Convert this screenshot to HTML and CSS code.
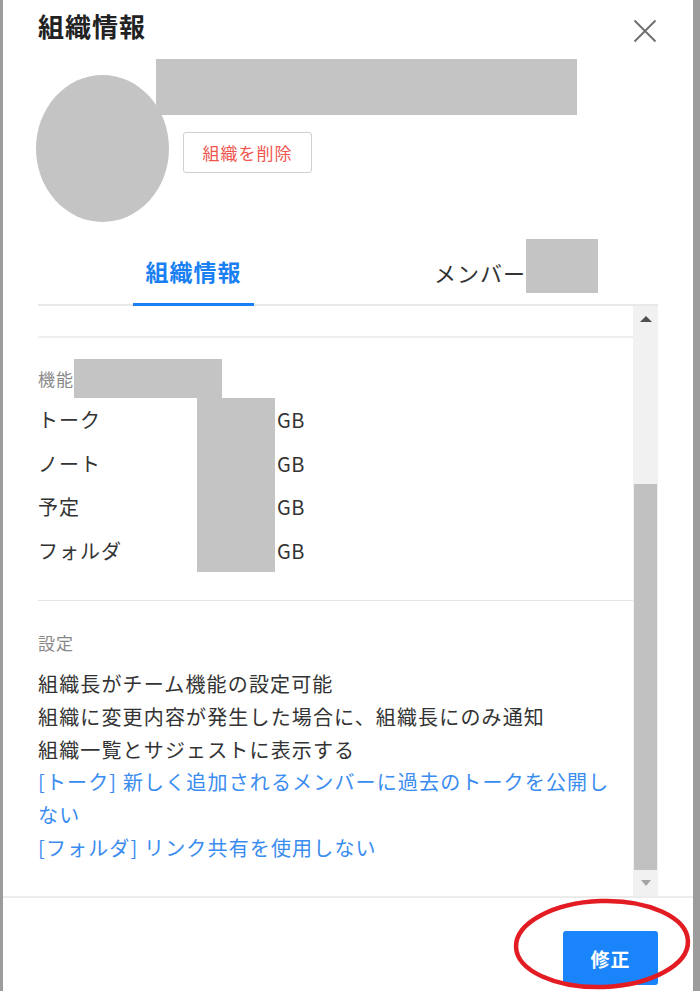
FILE: index.html
```html
<!DOCTYPE html>
<html lang="ja">
<head>
<meta charset="utf-8">
<title>組織情報</title>
<link rel="stylesheet" href="styles.css">
</head>
<body>
<div class="modal">
  <header class="header">
    <h1 class="title">組織情報</h1>
    <button class="close" aria-label="閉じる">
      <svg width="24" height="24" viewBox="0 0 24 24"><path d="M1.5 1.5 L22.5 22.5 M22.5 1.5 L1.5 22.5" stroke="#707070" stroke-width="2" fill="none"/></svg>
    </button>
  </header>

  <section class="profile">
    <div class="avatar"></div>
    <div class="profile-info">
      <div class="redact name-redact"></div>
      <button class="delete-btn">組織を削除</button>
    </div>
  </section>

  <nav class="tabs">
    <div class="tab tab-active"><span class="tab-label">組織情報</span></div>
    <div class="tab tab-members"><span class="tab-label">メンバー</span><span class="redact tab-redact"></span></div>
  </nav>

  <div class="scroll-area">
    <div class="scroll-content">
      <div class="top-gap"></div>
      <div class="divider thick"></div>
      <div class="section-label label-row"><span>機能</span><span class="redact label-redact"></span></div>
      <div class="rows">
        <div class="row"><span class="row-name">トーク</span><span class="redact row-val"></span><span class="unit">GB</span></div>
        <div class="row"><span class="row-name">ノート</span><span class="redact row-val"></span><span class="unit">GB</span></div>
        <div class="row"><span class="row-name">予定</span><span class="redact row-val"></span><span class="unit">GB</span></div>
        <div class="row"><span class="row-name">フォルダ</span><span class="redact row-val"></span><span class="unit">GB</span></div>
      </div>
      <div class="divider thin"></div>
      <div class="section-label settings-label">設定</div>
      <ul class="settings">
        <li>組織長がチーム機能の設定可能</li>
        <li>組織に変更内容が発生した場合に、組織長にのみ通知</li>
        <li>組織一覧とサジェストに表示する</li>
        <li class="link">[トーク] 新しく追加されるメンバーに過去のトークを公開しない</li>
        <li class="link">[フォルダ] リンク共有を使用しない</li>
      </ul>
    </div>
    <div class="scrollbar">
      <div class="sb-btn"><span class="arrow-up"></span></div>
      <div class="sb-track"></div>
      <div class="sb-thumb"></div>
      <div class="sb-btn"><span class="arrow-down"></span></div>
    </div>
  </div>

  <footer class="footer">
    <button class="primary-btn">修正</button>
  </footer>
</div>

<svg class="annotation" width="184" height="96" viewBox="0 0 184 96">
  <ellipse cx="90" cy="47" rx="86" ry="43" transform="rotate(-2 90 47)" fill="none" stroke="#e31b23" stroke-width="4.5"/>
</svg>
</body>
</html>
```

FILE: styles.css
```css
* { box-sizing: border-box; }

html, body {
  margin: 0;
  padding: 0;
}

body {
  width: 700px;
  height: 991px;
  overflow: hidden;
  background: #9c9c9c;
  font-family: "Noto Sans CJK JP", "Noto Sans", sans-serif;
  color: #333;
  position: relative;
}

.modal {
  margin-left: 3px;
  width: 690px;
  height: 991px;
  background: #fff;
  display: flex;
  flex-direction: column;
}

.header {
  display: flex;
  justify-content: space-between;
  align-items: flex-start;
  padding: 9px 36px 0 35px;
  height: 43px;
}

.title {
  margin: 0;
  font-size: 26px;
  line-height: 34px;
  font-weight: 700;
  letter-spacing: 1px;
  color: #222;
}

.close {
  margin-top: 10px;
  padding: 0;
  border: 0;
  background: none;
  width: 24px;
  height: 24px;
  display: block;
}

.close svg { display: block; }

.redact { background: #c4c4c4; display: block; }

.profile {
  display: flex;
  align-items: flex-start;
  margin-top: 16px;
  padding-left: 33px;
}

.avatar {
  width: 133px;
  height: 147px;
  margin-top: 16px;
  border-radius: 50%;
  background: #c4c4c4;
  flex: none;
}

.profile-info {
  margin-left: -13px;
  display: flex;
  flex-direction: column;
  align-items: flex-start;
}

.name-redact {
  width: 421px;
  height: 56px;
}

.delete-btn {
  margin-top: 17px;
  margin-left: 27px;
  width: 129px;
  height: 41px;
  border: 1px solid #cfcfcf;
  border-radius: 3px;
  background: #fff;
  color: #f0564f;
  font-family: inherit;
  font-size: 17px;
  letter-spacing: 1px;
  padding: 0;
}

.tabs {
  margin: 17px 35px 0;
  display: grid;
  grid-template-columns: 1fr 1fr;
  border-bottom: 2px solid #e8e8e8;
}

.tab {
  height: 65px;
  display: flex;
  justify-content: center;
  align-items: center;
  font-size: 22px;
  letter-spacing: 1px;
}

.tab-active .tab-label {
  align-self: stretch;
  display: flex;
  align-items: center;
  padding: 0 12px 0 13px;
  border-bottom: 3px solid #1a7ff2;
  margin-bottom: -2px;
  color: #1a7ff2;
  font-weight: 700;
  font-size: 23px;
  height: 67px;
}

.tab-members {
  padding-left: 26px;
  color: #333;
}

.tab-redact {
  width: 72px;
  height: 54px;
  margin-bottom: 12px;
}

.scroll-area {
  margin: 0 35px;
  height: 590px;
  display: flex;
}

.scroll-content {
  flex: 1;
  min-width: 0;
  padding-right: 12px;
}

.top-gap { height: 30px; }

.divider.thick { height: 2px; background: #efefef; margin-right: -12px; }
.divider.thin { height: 1px; background: #e6e6e6; margin-top: 28px; margin-right: -12px; }

.section-label {
  color: #888;
  font-size: 17px;
  letter-spacing: 1px;
}

.label-row {
  margin-top: 21px;
  display: flex;
  align-items: center;
  height: 39px;
}

.label-redact {
  width: 148px;
  height: 39px;
}

.rows { display: flex; flex-direction: column; }

.row {
  display: flex;
  align-items: center;
  height: 43.5px;
  font-size: 20px;
  letter-spacing: 1px;
}

.row-name { width: 159px; }

.row-val { width: 78px; height: 100%; }

.unit {
  margin-left: 2px;
  font-size: 20px;
  letter-spacing: 0.5px;
}

.settings-label {
  margin-top: 32px;
  line-height: 20px;
}

.settings {
  list-style: none;
  margin: 15px 0 0;
  padding: 0;
  font-size: 20px;
  letter-spacing: 1.15px;
  line-height: 32.8px;
}

.settings .link { color: #3a8cf0; }

.scrollbar {
  width: 25px;
  flex: none;
  background: #f1f1f1;
  display: flex;
  flex-direction: column;
}

.sb-btn {
  height: 26px;
  display: flex;
  align-items: center;
  justify-content: center;
  flex: none;
}

.sb-track { height: 152px; flex: none; }

.sb-thumb {
  height: 386px;
  margin: 0 1px;
  background: #c1c1c1;
  flex: none;
}

.arrow-up {
  width: 0;
  height: 0;
  border-left: 6.5px solid transparent;
  border-right: 6.5px solid transparent;
  border-bottom: 6px solid #505050;
}

.arrow-down {
  width: 0;
  height: 0;
  border-left: 5px solid transparent;
  border-right: 5px solid transparent;
  border-top: 6px solid #a3a3a3;
}

.footer {
  border-top: 2px solid #ececec;
  padding: 33px 35px 0;
  display: flex;
  justify-content: flex-end;
  flex: 1;
}

.primary-btn {
  width: 95px;
  height: 54px;
  border: 0;
  border-radius: 3px;
  background: #1a84fb;
  color: #fff;
  font-family: inherit;
  font-size: 19px;
  font-weight: 700;
  letter-spacing: 1px;
}

.annotation {
  position: absolute;
  left: 512px;
  top: 897px;
}
```
